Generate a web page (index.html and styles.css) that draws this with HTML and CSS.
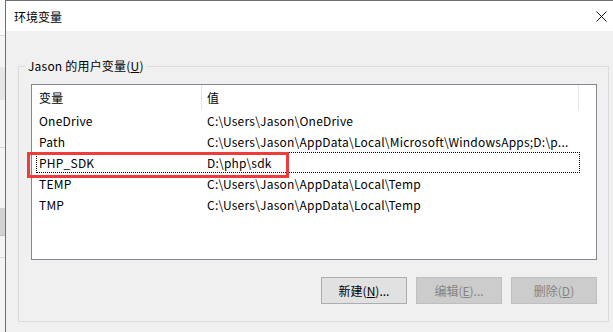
FILE: index.html
```html
<!DOCTYPE html>
<html lang="zh-CN">
  <head>
    <meta charset="UTF-8" />
    <meta name="viewport" content="width=device-width, initial-scale=1.0" />
    <title>环境变量</title>
    <link rel="stylesheet" href="styles.css">
  </head>
  <body>
    <div class="screen">
      <!-- window behind the dialog -->
      <div class="backdrop">
        <div class="bd-top"></div>
        <div class="bd-band"></div>
        <div class="bd-mid"></div>
        <div class="bd-band dark"></div>
        <div class="bd-bottom"></div>
      </div>

      <div class="dialog">
        <div class="titlebar">
          <span class="title">环境变量</span>
          <span class="close">
            <svg width="11" height="11" viewBox="0 0 11 11">
              <path d="M0.5 0.5 L10.5 10.5 M10.5 0.5 L0.5 10.5" stroke="#111" stroke-width="1" fill="none" />
            </svg>
          </span>
        </div>

        <div class="dialog-body">
          <fieldset class="group">
            <legend>Jason 的用户变量(<u>U</u>)</legend>

            <div class="listview">
              <div class="lv-header">
                <div class="hcell hcell-name">变量</div>
                <div class="hcell hcell-value">值</div>
              </div>
              <div class="lv-row">
                <div class="cell cell-name">OneDrive</div>
                <div class="cell cell-value">C:\Users\Jason\OneDrive</div>
              </div>
              <div class="lv-row">
                <div class="cell cell-name">Path</div>
                <div class="cell cell-value">C:\Users\Jason\AppData\Local\Microsoft\WindowsApps;D:\p...</div>
              </div>
              <div class="lv-row focused">
                <div class="cell cell-name">PHP_SDK</div>
                <div class="cell cell-value">D:\php\sdk</div>
                <div class="mark"></div>
              </div>
              <div class="lv-row">
                <div class="cell cell-name">TEMP</div>
                <div class="cell cell-value">C:\Users\Jason\AppData\Local\Temp</div>
              </div>
              <div class="lv-row">
                <div class="cell cell-name">TMP</div>
                <div class="cell cell-value">C:\Users\Jason\AppData\Local\Temp</div>
              </div>
            </div>

            <div class="buttons">
              <button type="button" class="btn">新建(<u>N</u>)...</button>
              <button type="button" class="btn" disabled>编辑(<u>E</u>)...</button>
              <button type="button" class="btn" disabled>删除(<u>D</u>)</button>
            </div>
          </fieldset>
        </div>
      </div>
    </div>
  </body>
</html>
```

FILE: styles.css
```css
body {
  margin: 0;
  padding: 0;
  font-family: "Noto Sans CJK SC", "Noto Sans", sans-serif;
  font-size: 12px;
  color: #000;
  background-color: #f0f0f0;
}
.screen {
  display: flex;
  width: 613px;
  height: 332px;
  overflow: hidden;
}

/* window behind */
.backdrop {
  width: 5px;
  flex-shrink: 0;
  display: flex;
  flex-direction: column;
  background-color: #f4f4f4;
}
.bd-top {
  height: 35px;
  border-bottom: 1px solid #d9d9d9;
  background-color: #fafafa;
}
.bd-band {
  margin-top: 31px;
  height: 33px;
  background-color: #e6e6e6;
}
.bd-mid {
  height: 47px;
  border-bottom: 1px solid #d9d9d9;
}
.bd-band.dark {
  margin-top: 60px;
  height: 27px;
  background-color: #d2d2d2;
  border-bottom: 1px solid #c0c0c0;
}
.bd-bottom {
  flex: 1;
  border-top: 1px solid #dadada;
  margin-top: 21px;
}

/* dialog */
.dialog {
  width: 630px;
  flex-shrink: 0;
  border-left: 1px solid #6f6f6f;
  border-top: 1px solid #6f6f6f;
  background-color: #f0f0f0;
}
.titlebar {
  height: 30px;
  background-color: #fff;
  display: flex;
  align-items: center;
  justify-content: space-between;
  padding-left: 8px;
}
.title {
  font-size: 12px;
}
.close {
  width: 40px;
  display: flex;
  justify-content: flex-start;
  padding-top: 1px;
}
.dialog-body {
  padding: 27px 0 0 12px;
}

/* group box */
.group {
  width: 591px;
  box-sizing: border-box;
  margin: 0;
  padding: 10px 11px 17px 12px;
  border: 1px solid #dcdcdc;
}
.group legend {
  padding: 0 3px;
  margin-left: -6px;
  line-height: 16px;
  letter-spacing: 0.2px;
}
.group u {
  text-decoration-thickness: 1px;
}

/* list view */
.listview {
  height: 174px;
  background-color: #fff;
  border: 1px solid #828790;
  letter-spacing: 0.22px;
}
.lv-header {
  display: flex;
  height: 25px;
}
.hcell {
  display: flex;
  align-items: center;
  box-sizing: border-box;
  border-right: 1px solid #e5e5e5;
}
.hcell-name {
  width: 170px;
  padding-left: 7px;
}
.hcell-value {
  width: 377px;
  padding-left: 5px;
}
.lv-row {
  position: relative;
  display: flex;
  height: 21px;
  width: 544px;
  margin-left: 4px;
  box-sizing: border-box;
  border: 1px dotted transparent;
}
.lv-row.focused {
  border-color: #000;
}
.cell {
  display: flex;
  align-items: center;
  white-space: nowrap;
  overflow: hidden;
}
.cell-name {
  width: 164px;
  padding-left: 2px;
  box-sizing: border-box;
}
.cell-value {
  flex: 1;
  padding-left: 6px;
}

/* red annotation box */
.mark {
  position: absolute;
  left: -10px;
  top: -1px;
  width: 262px;
  height: 26px;
  box-sizing: border-box;
  border: 3px solid #ef3b3b;
}

/* buttons */
.buttons {
  display: flex;
  justify-content: flex-end;
  gap: 9px;
  margin-top: 17px;
}
.btn {
  width: 86px;
  height: 27px;
  padding: 0;
  font-family: inherit;
  font-size: 12px;
  color: #000;
  background-color: #e1e1e1;
  border: 1px solid #adadad;
  border-radius: 0;
}
.btn:disabled {
  color: #838383;
  background-color: #cccccc;
  border-color: #bfbfbf;
}
```
